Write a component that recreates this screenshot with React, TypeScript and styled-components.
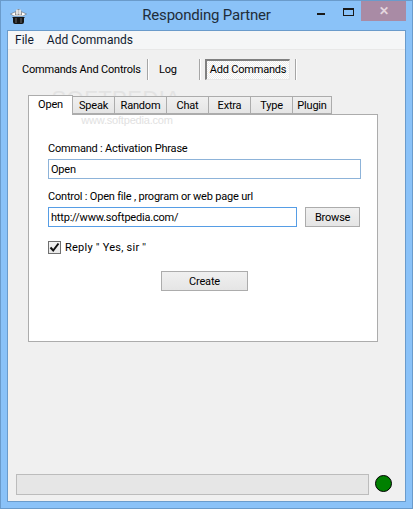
import React from 'react'
import styled, { createGlobalStyle } from 'styled-components'

const GlobalStyle = createGlobalStyle`
  html, body {
    margin: 0;
    padding: 0;
    background: #8ac2f8;
  }
  body {
    font-family: Roboto, "Liberation Sans", sans-serif;
    font-size: 11px;
    letter-spacing: -0.2px;
    color: #000;
  }
`

const Frame = styled.div`
  position: relative;
  box-sizing: border-box;
  width: 413px;
  height: 509px;
  background: #8ac2f8;
  border: 1px solid #6a9bcb;
  display: flex;
  flex-direction: column;
  overflow: hidden;
`

const TitleBar = styled.div`
  height: 29px;
  flex: none;
  display: grid;
  grid-template-columns: 1fr auto 1fr;
  align-items: start;
`

const AppIcon = styled.svg`
  display: block;
  margin: 7px 0 0 9px;
`

const Title = styled.div`
  font-size: 15px;
  line-height: 20px;
  margin-top: 4px;
  color: #1f2d3a;
`

const WindowControls = styled.div`
  display: flex;
  justify-content: flex-end;
  align-items: flex-start;
  margin-right: 6px;
`

const MinButton = styled.div`
  width: 8px;
  height: 2px;
  margin: 12px 18px 0 0;
  background: #1a1a1a;
`

const MaxButton = styled.div`
  box-sizing: border-box;
  width: 11px;
  height: 8px;
  margin: 7px 7px 0 0;
  border: 1px solid #1a1a1a;
  border-top-width: 2px;
`

const CloseButton = styled.div`
  width: 45px;
  height: 20px;
  background: #a98ba5;
  color: #e4d6df;
  font: bold 12px/20px "Liberation Sans", sans-serif;
  text-align: center;
`

const Client = styled.div`
  box-sizing: border-box;
  width: 399px;
  height: 472px;
  margin-left: 6px;
  background: #f0f0f0;
  border: 1px solid #6a9bcb;
  display: flex;
  flex-direction: column;
`

const MenuBar = styled.div`
  height: 18px;
  flex: none;
  display: flex;
  gap: 13px;
  padding-left: 7px;
  background: #f5f6f7;
  border-bottom: 1px solid #e8e8e8;
  line-height: 18px;
  font-size: 12px;
  letter-spacing: 0;
`

const MenuItem = styled.span`
  color: #101a30;
`

const Toolbar = styled.div`
  display: flex;
  align-items: flex-start;
  height: 22px;
  margin: 9px 0 0 14px;
`

const ToolItem = styled.div<{ $pressed?: boolean; $width: number }>`
  box-sizing: border-box;
  width: ${({ $width }) => $width}px;
  height: 21px;
  line-height: ${({ $pressed }) => ($pressed ? '18px' : '21px')};
  white-space: nowrap;
  ${({ $pressed }) =>
    $pressed
      ? `
    text-align: center;
    border: 2px solid #808080;
    border-right: 1px solid #e8e8e8;
    border-bottom: 1px solid #e8e8e8;
    background: repeating-conic-gradient(#ffffff 0 25%, #ececec 0 50%) 0 0 / 2px 2px;
  `
      : ''}
`

const ToolSeparator = styled.div<{ $left?: number; $right?: number }>`
  width: 1px;
  height: 21px;
  margin: 0 ${({ $right }) => $right ?? 0}px 0 ${({ $left }) => $left ?? 0}px;
  background: #a6a6a6;
  box-shadow: 1px 0 0 #ffffff;
`

const TabArea = styled.div`
  margin: 14px 0 0 20px;
  width: 350px;
`

const TabStrip = styled.div`
  display: flex;
  align-items: flex-end;
  height: 20px;
  position: relative;
  z-index: 1;
  margin-bottom: -1px;
`

const Tab = styled.div<{ $active?: boolean; $width: number }>`
  box-sizing: border-box;
  width: ${({ $width }) => $width}px;
  height: ${({ $active }) => ($active ? '20px' : '18px')};
  margin-bottom: ${({ $active }) => ($active ? '0' : '1px')};
  margin-left: -1px;
  border: 1px solid #acacac;
  border-bottom: ${({ $active }) => ($active ? 'none' : '1px solid #acacac')};
  background: ${({ $active }) => ($active ? '#ffffff' : 'linear-gradient(#f0f0f0, #e5e5e5)')};
  line-height: ${({ $active }) => ($active ? '18px' : '18px')};
  text-align: center;

  &:first-child {
    margin-left: 0;
  }
`

const Panel = styled.div`
  box-sizing: border-box;
  height: 228px;
  background: #ffffff;
  border: 1px solid #acacac;
  padding: 25px 17px 0 19px;
`

const FieldLabel = styled.div`
  line-height: 18px;
  height: 16px;
  margin-bottom: 3px;
`

const InputBox = styled.div<{ $focused?: boolean; $width: number }>`
  box-sizing: border-box;
  width: ${({ $width }) => $width}px;
  height: 20px;
  padding-left: 2px;
  line-height: 19px;
  border: 1px solid ${({ $focused }) => ($focused ? '#569de5' : '#8db3d9')};
  background: #ffffff;
`

const FieldRow = styled.div`
  display: flex;
  gap: 8px;
`

const FieldBlock = styled.div`
  margin-bottom: 9px;
`

const Button = styled.div<{ $width: number }>`
  box-sizing: border-box;
  width: ${({ $width }) => $width}px;
  height: 20px;
  line-height: 20px;
  text-align: center;
  border: 1px solid #acacac;
  background: linear-gradient(#f0f0f0, #e5e5e5);
`

const CheckRow = styled.div`
  display: flex;
  align-items: center;
  gap: 4px;
  height: 14px;
  margin-top: 13px;
`

const CheckBox = styled.div`
  box-sizing: border-box;
  width: 13px;
  height: 13px;
  border: 1px solid #707070;
  background: linear-gradient(#f4f4f4, #e8e8e8);
  display: flex;
  align-items: center;
  justify-content: center;
`

const CheckLabel = styled.span`
  letter-spacing: 0.25px;
`

const CreateRow = styled.div`
  display: flex;
  padding-left: 113px;
  margin-top: 17px;
`

const Footer = styled.div`
  display: flex;
  align-items: flex-start;
  gap: 6px;
  margin: auto 0 6px 8px;
`

const StatusBar = styled.div`
  box-sizing: border-box;
  width: 353px;
  height: 21px;
  background: #e6e6e6;
  border: 1px solid #bcbcbc;
`

const StatusLight = styled.div`
  box-sizing: border-box;
  width: 17px;
  height: 17px;
  margin-top: 1px;
  border-radius: 50%;
  background: #008000;
  border: 1px solid #000000;
`

// softpedia stamp, sits on top of the tabs
const Watermark = styled.div`
  position: absolute;
  left: 50px;
  top: 85px;
  width: 130px;
  text-align: center;
  pointer-events: none;
  color: #d8d8d8;
  opacity: 0.5;
  font-family: "Liberation Sans", sans-serif;
`

const WatermarkBig = styled.div`
  font-size: 22px;
  line-height: 26px;
  letter-spacing: 0.5px;
`

const WatermarkSmall = styled.div`
  font-size: 11px;
  line-height: 12px;
  margin-top: 2px;
  padding-left: 22px;
  color: #c4c4c4;
`

const tabs = [
  { label: 'Open', width: 45, active: true },
  { label: 'Speak', width: 43 },
  { label: 'Random', width: 53 },
  { label: 'Chat', width: 43 },
  { label: 'Extra', width: 43 },
  { label: 'Type', width: 43 },
  { label: 'Plugin', width: 40 },
]

const App = () => {
  return (
    <Frame>
      <GlobalStyle />
      <TitleBar>
        <AppIcon width="17" height="17" viewBox="0 0 17 17">
          <path d="M0.5 6 L5 4 L12 4 L16.5 6 L13 8 L4 8 Z" fill="#ffffff" stroke="#555" strokeWidth="0.5" />
          <path d="M5 7 Q5 1 8.5 1 Q12 1 12 7 Z" fill="#8a8a8a" />
          <path d="M6 3 H11 M6 5 H11 M7 1.5 V7 M10 1.5 V7" stroke="#ffffff" strokeWidth="1" />
          <path d="M2 9 H15 L14 10 V14 Q14 16 12 16 H5 Q3 16 3 14 V10 Z" fill="#161616" />
          <path d="M6 10 V15 M11 10 V15" stroke="#6a6a6a" strokeWidth="1" />
        </AppIcon>
        <Title>Responding Partner</Title>
        <WindowControls>
          <MinButton />
          <MaxButton />
          <CloseButton>✕</CloseButton>
        </WindowControls>
      </TitleBar>
      <Client>
        <MenuBar>
          <MenuItem>File</MenuItem>
          <MenuItem>Add Commands</MenuItem>
        </MenuBar>
        <Toolbar>
          <ToolItem $width={125}>Commands And Controls</ToolItem>
          <ToolSeparator $right={11} />
          <ToolItem $width={40}>Log</ToolItem>
          <ToolSeparator $right={5} />
          <ToolItem $pressed $width={85}>
            Add Commands
          </ToolItem>
          <ToolSeparator $left={5} />
        </Toolbar>
        <TabArea>
          <TabStrip>
            {tabs.map((tab) => (
              <Tab key={tab.label} $active={tab.active} $width={tab.width}>
                {tab.label}
              </Tab>
            ))}
          </TabStrip>
          <Panel>
            <FieldBlock>
              <FieldLabel>Command : Activation Phrase</FieldLabel>
              <InputBox $width={313}>Open</InputBox>
            </FieldBlock>
            <FieldBlock>
              <FieldLabel>Control : Open file , program or web page url</FieldLabel>
              <FieldRow>
                <InputBox $focused $width={250}>
                  http://www.softpedia.com/
                </InputBox>
                <Button $width={55}>Browse</Button>
              </FieldRow>
            </FieldBlock>
            <CheckRow>
              <CheckBox>
                <svg width="11" height="11" viewBox="0 0 11 11">
                  <path d="M1.5 5.5 L4.2 8.5 L9.5 1.5" fill="none" stroke="#111" strokeWidth="2" />
                </svg>
              </CheckBox>
              <CheckLabel>Reply '' Yes, sir ''</CheckLabel>
            </CheckRow>
            <CreateRow>
              <Button $width={87}>Create</Button>
            </CreateRow>
          </Panel>
        </TabArea>
        <Footer>
          <StatusBar />
          <StatusLight />
        </Footer>
      </Client>
      <Watermark>
        <WatermarkBig>SOFTPEDIA</WatermarkBig>
        <WatermarkSmall>www.softpedia.com</WatermarkSmall>
      </Watermark>
    </Frame>
  )
}

export default App
